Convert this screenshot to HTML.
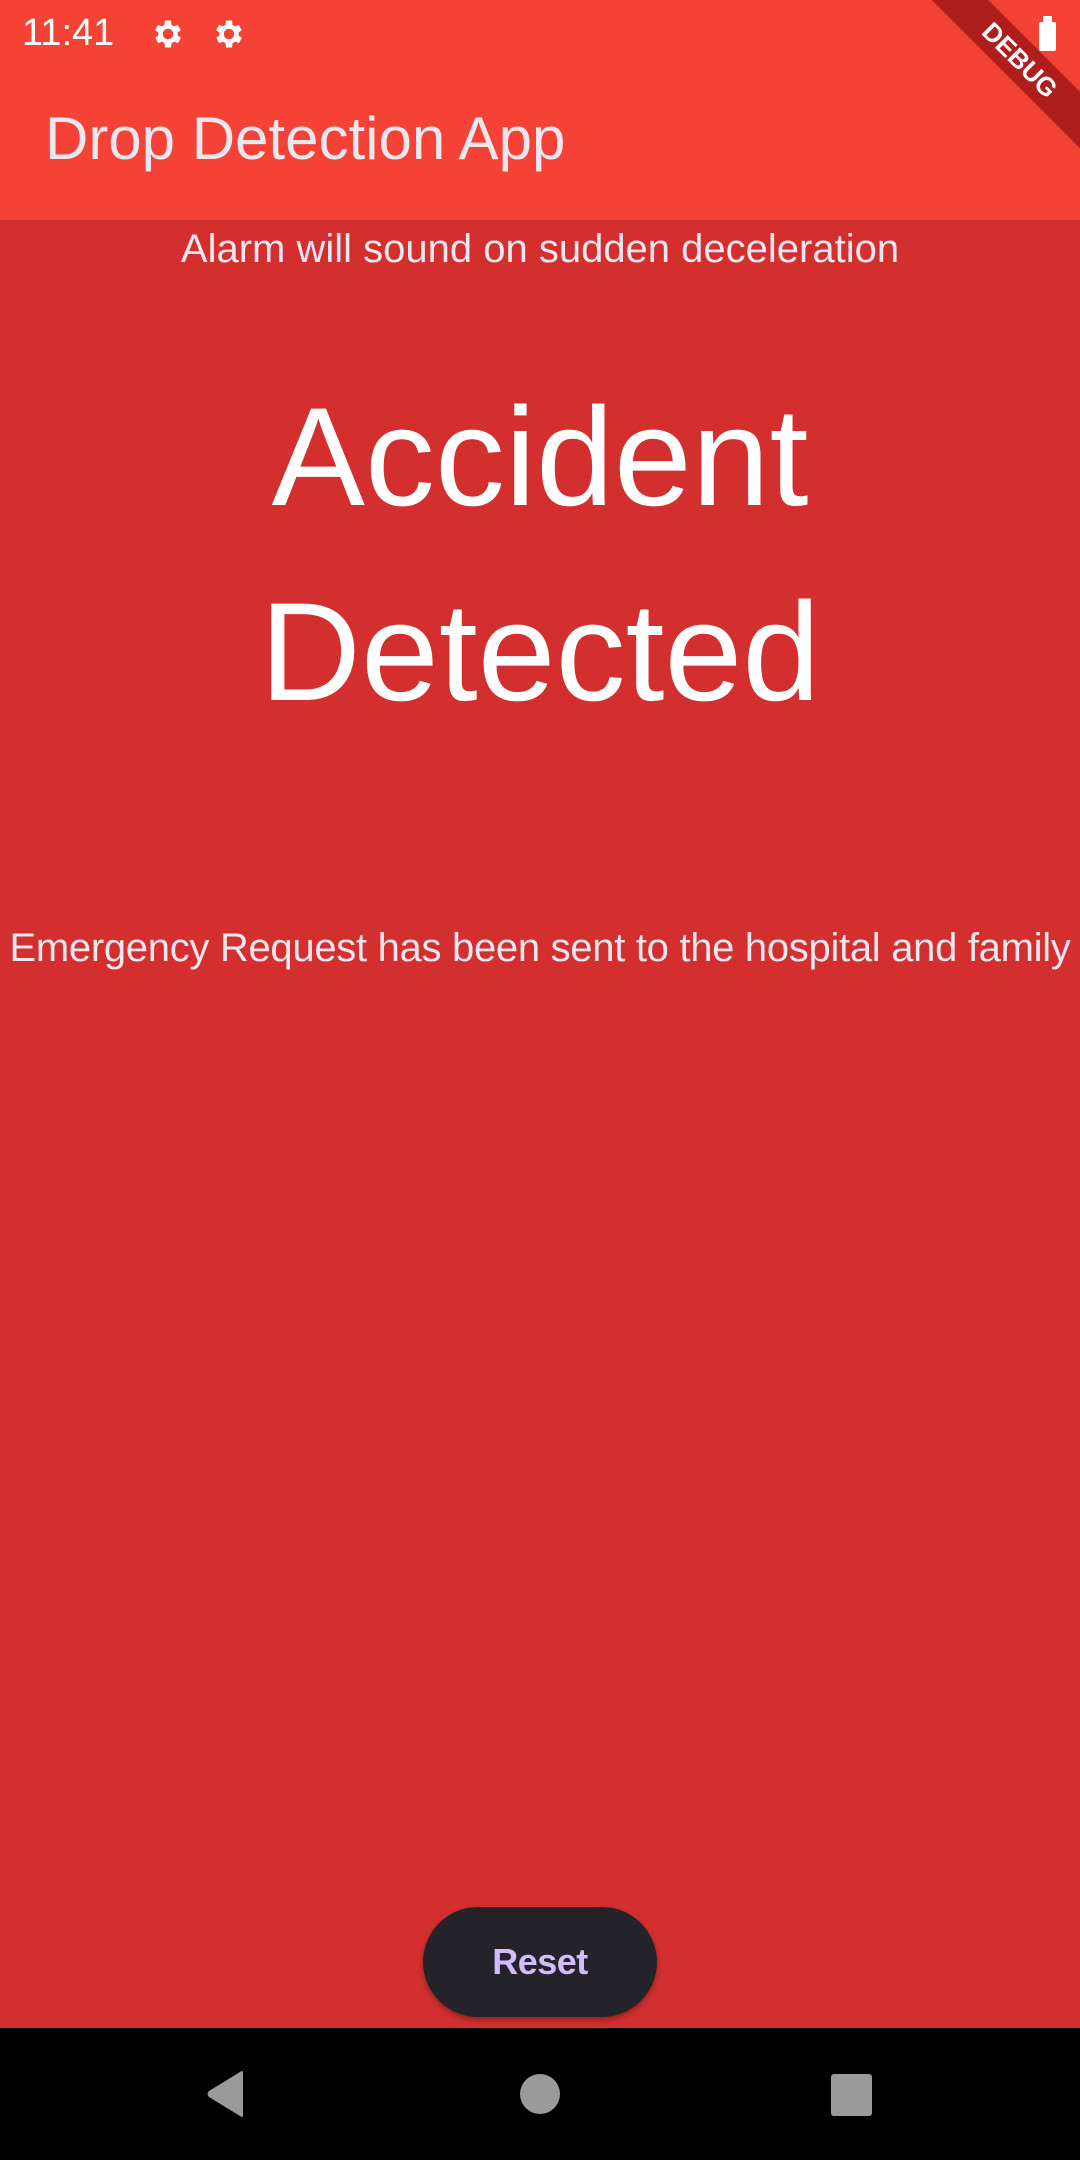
<!DOCTYPE html>
<html><head><meta charset="utf-8"><style>
html,body{margin:0;padding:0}
body{width:1080px;height:2160px;position:relative;overflow:hidden;background:#d32f2f;font-family:"Liberation Sans",Roboto,sans-serif}
.appbar{position:absolute;left:0;top:0;width:1080px;height:220px;background:#f44336}
.t{position:absolute;white-space:nowrap}
.nav{position:absolute;left:0;top:2028px;width:1080px;height:132px;background:#000}
</style></head><body>
<div class="appbar"></div>
<div class="t" style="left:22px;top:12px;font-size:38px;color:#fff">11:41</div>
<svg style="position:absolute;left:150px;top:16px" width="36" height="36" viewBox="0 0 24 24"><path fill="#fff" d="M19.4 13a7.5 7.5 0 0 0 0-2l2.1-1.6-2-3.5-2.5 1a7 7 0 0 0-1.7-1L15 3h-4l-.4 2.9a7 7 0 0 0-1.7 1l-2.5-1-2 3.5L6.6 11a7.5 7.5 0 0 0 0 2l-2.1 1.6 2 3.5 2.5-1a7 7 0 0 0 1.7 1L11 21h4l.4-2.9a7 7 0 0 0 1.7-1l2.5 1 2-3.5zM13 15.5a3.5 3.5 0 1 1 0-7 3.5 3.5 0 0 1 0 7z" transform="translate(-1 0)"/></svg>
<svg style="position:absolute;left:211px;top:16px" width="36" height="36" viewBox="0 0 24 24"><path fill="#fff" d="M19.4 13a7.5 7.5 0 0 0 0-2l2.1-1.6-2-3.5-2.5 1a7 7 0 0 0-1.7-1L15 3h-4l-.4 2.9a7 7 0 0 0-1.7 1l-2.5-1-2 3.5L6.6 11a7.5 7.5 0 0 0 0 2l-2.1 1.6 2 3.5 2.5-1a7 7 0 0 0 1.7 1L11 21h4l.4-2.9a7 7 0 0 0 1.7-1l2.5 1 2-3.5zM13 15.5a3.5 3.5 0 1 1 0-7 3.5 3.5 0 0 1 0 7z" transform="translate(-1 0)"/></svg>
<div style="position:absolute;left:1039px;top:22px;width:17px;height:29px;background:#fff;border-radius:2px"></div>
<div style="position:absolute;left:1043px;top:16px;width:9px;height:6px;background:#fff"></div>
<div style="position:absolute;left:870px;top:40px;width:300px;height:40px;background:rgba(160,24,24,0.85);transform:rotate(45deg);color:#fff;font-weight:bold;font-size:26px;line-height:40px;text-align:center">DEBUG</div>
<div class="t" style="left:45px;top:104px;font-size:60px;color:#ece6ee">Drop Detection App</div>
<div class="t" style="left:0;width:1080px;text-align:center;top:227px;font-size:40px;color:#ece6ee">Alarm will sound on sudden deceleration</div>
<div class="t" style="left:0;width:1080px;text-align:center;top:359px;font-size:140px;line-height:195px;color:#fff">Accident<br>Detected</div>
<div class="t" style="left:0;width:1080px;text-align:center;top:926px;font-size:40px;color:#ece6ee;letter-spacing:-0.3px">Emergency Request has been sent to the hospital and family</div>
<div style="position:absolute;left:423px;top:1907px;width:234px;height:110px;border-radius:55px;background:#25232a;box-shadow:0 3px 6px rgba(0,0,0,0.3);color:#d0bcff;font-size:36px;font-weight:bold;text-align:center;line-height:110px;letter-spacing:-0.5px">Reset</div>
<div class="nav"></div>
<svg style="position:absolute;left:205px;top:2070px" width="42" height="48" viewBox="0 0 42 48"><path d="M38 2 L38 46 Q37 48 35 46 L4 27 Q1 24 4 21 L35 2 Q37 0 38 2Z" fill="#9a9a9a"/></svg>
<div style="position:absolute;left:520px;top:2074px;width:40px;height:40px;border-radius:50%;background:#9a9a9a"></div>
<div style="position:absolute;left:831px;top:2074px;width:41px;height:42px;border-radius:3px;background:#9a9a9a"></div>
</body></html>
